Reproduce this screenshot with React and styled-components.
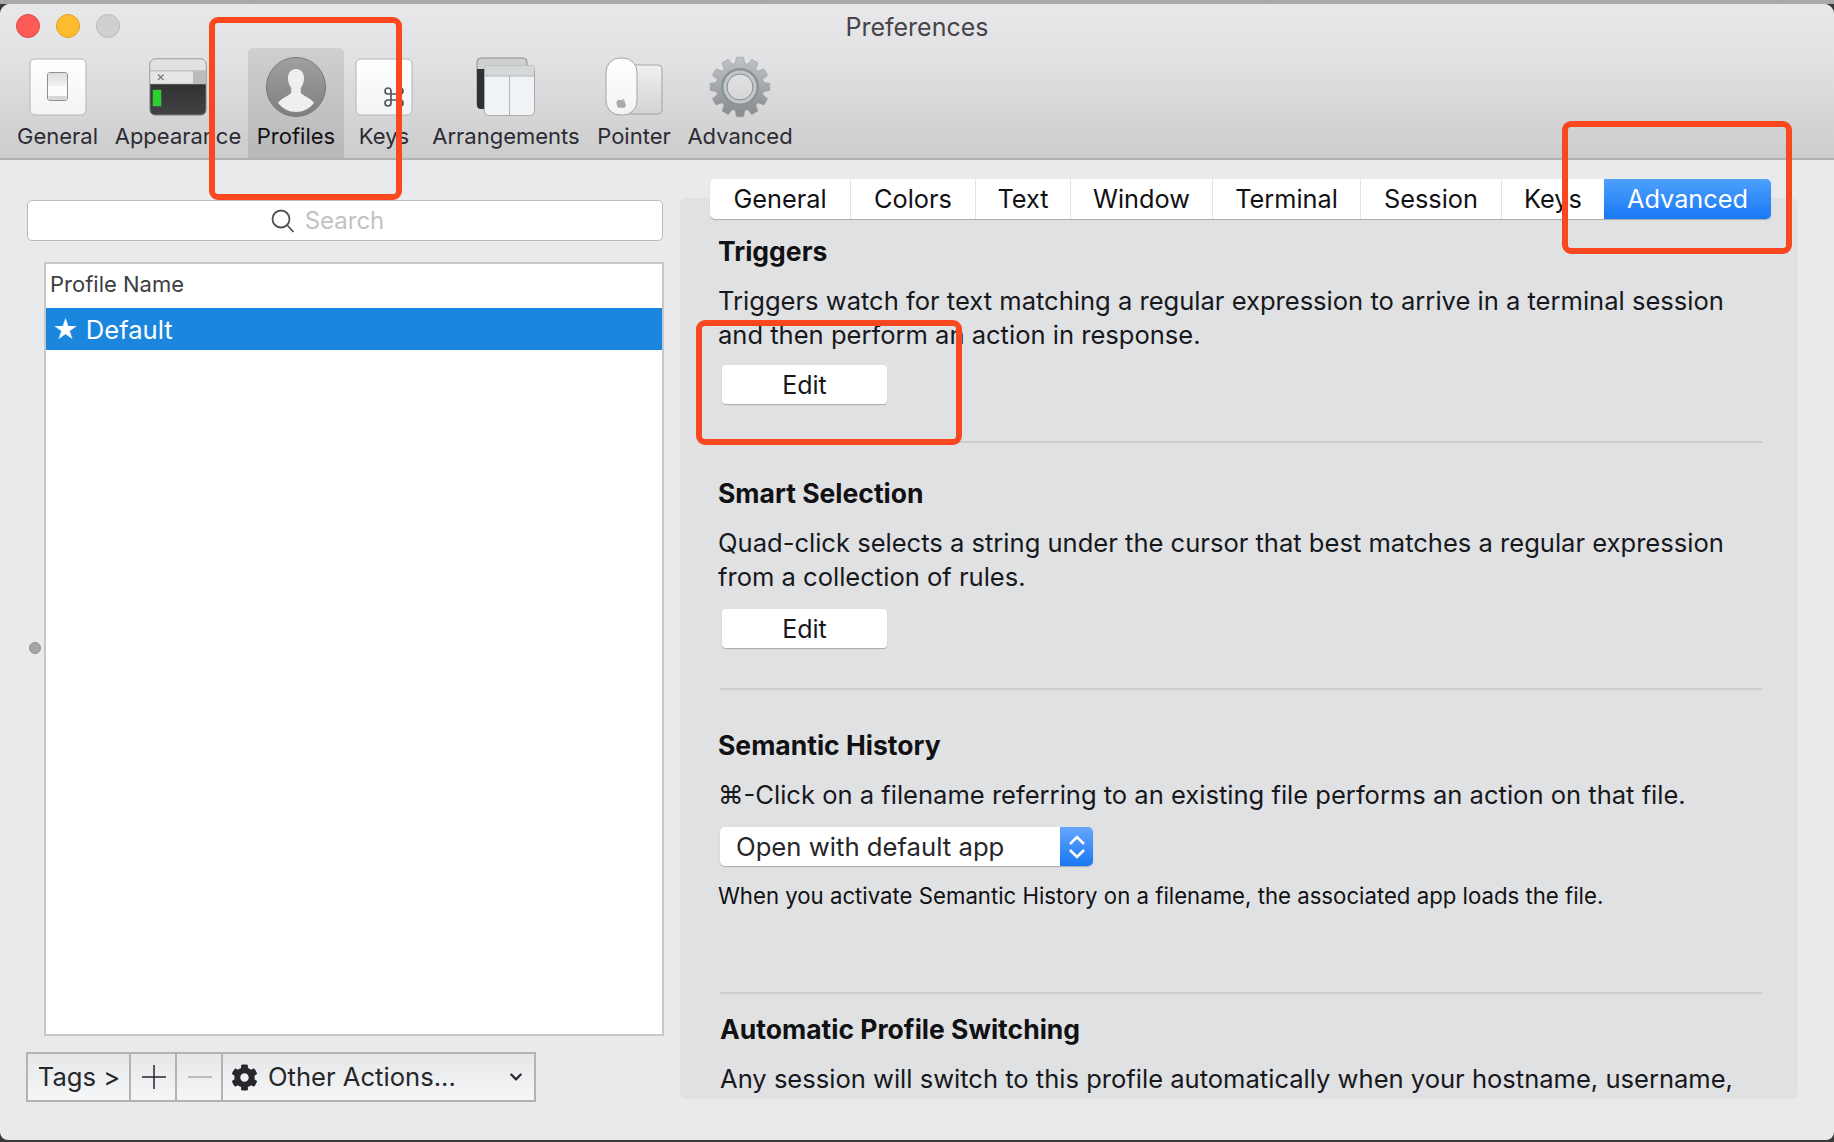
import React from 'react';
import styled, { createGlobalStyle } from 'styled-components';
import { FaCog, FaChevronDown } from 'react-icons/fa';
import { Command } from 'lucide-react';

const Global = createGlobalStyle`
  html, body { margin: 0; padding: 0; background: #8f8f8f; }
  body { font-family: Inter, "Liberation Sans", sans-serif; color: #1b1c20; }
  * { box-sizing: border-box; }
`;

const Screen = styled.div`
  width: 1834px;
  height: 1142px;
  padding-top: 4px;
  position: relative;
  overflow: hidden;
  background: linear-gradient(#a9a9a9 0 4px, #3a3a3a 4px);
`;

const Win = styled.div`
  height: 1136px;
  display: flex;
  flex-direction: column;
  background: #e9eaec;
  border-radius: 10px 10px 8px 8px;
  overflow: hidden;
`;

const Head = styled.header`
  height: 156px;
  flex: none;
  background: linear-gradient(#e8e7e9 0%, #e2e1e3 35%, #cdcccd 100%);
  border-bottom: 2px solid #b1b1b1;
`;

const TitleRow = styled.div`
  height: 44px;
  display: grid;
  grid-template-columns: 1fr auto 1fr;
  align-items: center;
`;

const Lights = styled.div`
  display: flex;
  gap: 16px;
  padding-left: 16px;
`;

const Light = styled.span`
  width: 24px;
  height: 24px;
  border-radius: 50%;
  background: ${(p) => p.$c};
  border: 1px solid ${(p) => p.$b};
`;

const Title = styled.div`
  font-size: 25px;
  color: #45454a;
  padding-top: 2px;
`;

const Tools = styled.nav`
  display: flex;
  padding-left: 7px;
`;

const Tool = styled.div`
  width: ${(p) => p.$w}px;
  height: 110px;
  flex: none;
  display: flex;
  flex-direction: column;
  align-items: center;
  background: ${(p) => (p.$on ? 'linear-gradient(#cfced0, #b9b8b9)' : 'none')};
  border-radius: 5px 5px 0 0;
  color: ${(p) => (p.$on ? '#111114' : '#2b2c33')};
`;

const ToolIcon = styled.div`
  width: 64px;
  height: 64px;
  margin-top: 7px;
  display: flex;
  align-items: center;
  justify-content: center;
`;

const ToolLabel = styled.span`
  font-size: 22px;
  line-height: 26px;
  margin-top: 4px;
  white-space: nowrap;
`;

const Body = styled.div`
  flex: 1;
  display: flex;
  min-height: 0;
`;

const Side = styled.aside`
  width: 680px;
  flex: none;
  padding: 40px 17px 0 27px;
  display: flex;
  flex-direction: column;
`;

const Search = styled.div`
  height: 41px;
  flex: none;
  padding: 0 35px 0 0;
  display: flex;
  align-items: center;
  justify-content: center;
  gap: 10px;
  background: #fff;
  border: 1px solid #b9b9bb;
  border-radius: 5px;
  color: #c2c2c4;
  font-size: 24px;
  line-height: 44px;
`;

const List = styled.div`
  height: 774px;
  flex: none;
  margin: 21px -1px 16px 17px;
  background: #fff;
  border: 2px solid #c6c7c8;
`;

const ListHead = styled.div`
  height: 44px;
  padding: 0 0 4px 4px;
  display: flex;
  align-items: center;
  font-size: 22px;
  color: #3d3e42;
`;

const Row = styled.div`
  height: 42px;
  padding: 0 0 0 6px;
  display: flex;
  align-items: center;
  gap: 7px;
  background: #1b86de;
  color: #fff;
  font-size: 25.6px;
`;

const Bar = styled.div`
  width: 510px;
  height: 50px;
  flex: none;
  margin-left: -1px;
  display: flex;
  border: 2px solid #b3b3b5;
  background: linear-gradient(#e6e7e9, #f5f6f7);
`;

const BarCell = styled.div`
  width: ${(p) => p.$w}px;
  flex: ${(p) => (p.$w ? 'none' : 1)};
  display: flex;
  align-items: center;
  justify-content: ${(p) => (p.$w ? 'center' : 'flex-start')};
  gap: 10px;
  padding: ${(p) => (p.$w ? '0 0 0 1px' : '0 11px 0 8px')};
  font-size: 25.6px;
  line-height: 32px;
  color: #26272b;
  border-right: 2px solid #b3b3b5;
  &:last-child { border-right: 0; }
`;

const ActionLabel = styled.span`
  flex: 1;
`;

const Main = styled.main`
  flex: 1;
  padding: 19px 36px 0 0;
`;

const Tabs = styled.div`
  position: relative;
  z-index: 1;
  display: flex;
  width: 1061px;
  height: 40px;
  margin: 0 0 -21px 30px;
  background: #fff;
  border-radius: 5px;
  box-shadow: 0 1px 1px #a9a9ab;
`;

const Tab = styled.div`
  width: ${(p) => p.$w}px;
  flex: none;
  padding-bottom: 2px;
  display: flex;
  align-items: center;
  justify-content: center;
  font-size: 25.3px;
  color: ${(p) => (p.$on ? '#fff' : '#111114')};
  background: ${(p) => (p.$on ? 'linear-gradient(#4ea1fb, #1878f5)' : 'none')};
  border-right: ${(p) => (p.$on ? 0 : '1px solid #e2e2e3')};
  border-radius: ${(p) => (p.$on ? '0 5px 5px 0' : 0)};
  &:nth-last-child(2) { border-right: 0; }
`;

const Panel = styled.section`
  height: 901px;
  padding: 0 36px 0 38px;
  background: #e0e1e3;
  border-radius: 7px;
  overflow: hidden;
`;

const Block = styled.div`
  height: ${(p) => p.$h}px;
  padding-top: ${(p) => p.$top}px;
  margin-left: ${(p) => (p.$shift ? '2px' : 0)};
`;

const Rule = styled.hr`
  height: 2px;
  margin: 0 0 0 2px;
  border: 0;
  background: #cdcecf;
`;

const Heading = styled.h3`
  margin: 0 0 18px;
  font-size: 26.5px;
  line-height: 30px;
  font-weight: 700;
  color: #111114;
`;

const Para = styled.p`
  margin: 0;
  font-size: 25.56px;
  line-height: 34px;
  color: #17181c;
  white-space: nowrap;
`;

const Small = styled.p`
  margin: 16px 0 0;
  font-size: 22.2px;
  line-height: 28px;
  color: #111114;
  white-space: nowrap;
`;

const EditBtn = styled.div`
  width: 165px;
  height: 39px;
  margin: ${(p) => p.$m}px 0 0 4px;
  display: flex;
  align-items: center;
  justify-content: center;
  background: #fff;
  border-radius: 4px;
  box-shadow: 0 1px 1px #a9a9ab;
  font-size: 25px;
  color: #17181c;
`;

const Select = styled.div`
  width: 373px;
  height: 39px;
  margin: 15px 0 0 2px;
  display: flex;
  background: #fff;
  border-radius: 5px;
  box-shadow: 0 1px 1px #a9a9ab;
  overflow: hidden;
`;

const SelectText = styled.span`
  flex: 1;
  padding-left: 16px;
  font-size: 25.7px;
  line-height: 40px;
  color: #26272b;
`;

const SelectArrow = styled.span`
  width: 33px;
  display: flex;
  align-items: center;
  justify-content: center;
  background: linear-gradient(#66a6fa, #1878f5);
`;

const Splitter = styled.span`
  position: absolute;
  left: 29px;
  top: 642px;
  width: 12px;
  height: 12px;
  border-radius: 50%;
  background: #a4a5a7;
  border: 1px solid #8e8f91;
`;

const Mark = styled.div`
  position: absolute;
  left: ${(p) => p.$x}px;
  top: ${(p) => p.$y}px;
  width: ${(p) => p.$w}px;
  height: ${(p) => p.$h}px;
  z-index: 5;
  border: 6px solid #f9481f;
  border-radius: 9px;
`;

const GeneralIcon = () => (
  <svg width="58" height="58" viewBox="0 0 58 58">
    <defs>
      <linearGradient id="ks" x1="0" y1="0" x2="0" y2="1"><stop offset="0" stopColor="#fff" /><stop offset="1" stopColor="#f1f3f5" /></linearGradient>
      <linearGradient id="sw" x1="0" y1="0" x2="0" y2="1"><stop offset="0" stopColor="#dcdee0" /><stop offset="1" stopColor="#f1f2f3" /></linearGradient>
    </defs>
    <rect x="1" y="1" width="56" height="56" rx="5" fill="url(#ks)" stroke="#b4b4b6" />
    <rect x="18.500" y="14.500" width="20" height="28" rx="2.500" fill="#fbfcfc" stroke="#8f9092" />
    <rect x="19" y="15" width="19" height="13" rx="2" fill="url(#sw)" />
    <rect x="19.500" y="38" width="18" height="4" fill="#d5d6d8" />
  </svg>
);

const AppearanceIcon = () => (
  <svg width="58" height="58" viewBox="0 0 58 58">
    <defs>
      <linearGradient id="term" x1="0" y1="0" x2="0" y2="1"><stop offset="0" stopColor="#242526" /><stop offset="1" stopColor="#414243" /></linearGradient>
    </defs>
    <rect x="1" y="1" width="56" height="56" rx="5" fill="url(#term)" stroke="#7d7d7d" />
    <path d="M1 6a5 5 0 0 1 5-5h46a5 5 0 0 1 5 5v7H1z" fill="#dfe1e2" stroke="#a8a9aa" strokeWidth="0.6" />
    <rect x="1" y="13" width="56" height="13" fill="#e4e6e7" stroke="#a8a9aa" strokeWidth="0.6" />
    <rect x="44" y="13" width="13" height="13" fill="#b9bbbc" />
    <path d="M9 16.500l5.500 5.500M14.500 16.500L9 22" stroke="#77787a" strokeWidth="1.200" />
    <rect x="4" y="32" width="8" height="16" fill="#28d42c" stroke="#57a857" strokeWidth="0.6" />
  </svg>
);

const ProfileIcon = () => (
  <svg width="60" height="60" viewBox="0 0 60 60">
    <defs>
      <linearGradient id="pf" x1="0" y1="0" x2="0" y2="1"><stop offset="0" stopColor="#a0a0a0" /><stop offset="1" stopColor="#7f7f80" /></linearGradient>
      <clipPath id="pc"><circle cx="30" cy="30" r="28" /></clipPath>
    </defs>
    <circle cx="30" cy="30" r="29.500" fill="url(#pf)" stroke="#777" />
    <path clipPath="url(#pc)" d="M30 12c-5 0-8 4-8 9 0 4 1.300 7.500 3.300 10v4c0 3-10.300 6-13.300 11 5 6 11 9 18 9s13-3 18-9c-3-5-13.300-8-13.300-11v-4c2-2.500 3.300-6 3.300-10 0-5-3-9-8-9z" fill="#eeeff0" />
  </svg>
);

const KeysIcon = () => (
  <svg width="58" height="58" viewBox="0 0 58 58">
    <rect x="1" y="1" width="56" height="56" rx="5" fill="url(#ks)" stroke="#b4b4b6" />
    <Command x="27" y="27" width="24" height="24" stroke="#55565a" strokeWidth="1.700" />
  </svg>
);

const ArrangeIcon = () => (
  <svg width="60" height="60" viewBox="0 0 60 60">
    <path d="M5 1h42a4 4 0 0 1 4 4v46H5a4 4 0 0 1-4-4V5a4 4 0 0 1 4-4z" fill="#cfd1d1" stroke="#8c8d8e" />
    <path d="M1 12h10v40H5a4 4 0 0 1-4-4z" fill="#2f3031" />
    <rect x="8.500" y="8.500" width="50" height="50" rx="4" fill="#f0f3f6" stroke="#a9aaac" />
    <path d="M9 12.500a4 4 0 0 1 4-4h41a4 4 0 0 1 4 4V19H9z" fill="#d5d8d9" />
    <path d="M33.500 19v39M9 19h49" stroke="#b4b5b6" />
  </svg>
);

const PointerIcon = () => (
  <svg width="58" height="60" viewBox="0 0 58 60">
    <defs>
      <linearGradient id="pad" x1="0" y1="0" x2="0" y2="1"><stop offset="0" stopColor="#eff0f1" /><stop offset="1" stopColor="#d2d3d4" /></linearGradient>
    </defs>
    <rect x="20" y="8" width="37" height="49" rx="4" fill="url(#pad)" stroke="#a3a4a5" />
    <rect x="1" y="1" width="31" height="57" rx="14" fill="url(#ks)" stroke="#a3a4a5" />
    <path d="M16.500 43.500c1-1.200 2-1.500 3-1.500-.2 1-.9 1.800-2 2 1 0 1.500.4 2.500.4.500 0 .8-.2 1-.2-1.600 1-1.400 3 .2 3.800-.6 1.800-1.700 3-2.700 3-.8 0-1.300-.4-2-.4s-1.300.4-2 .4c-1.400 0-3-2.600-3-5 0-2.200 1.500-3.300 2.800-3.300.8 0 1.500.4 2.200.6z" fill="#a9aaac" />
  </svg>
);

// 12 tooth outline, computed so one gradient runs over the whole gear
const gearPath = (() => {
  const pts = [];
  for (let i = 0; i < 12; i++) {
    const a = (i * Math.PI) / 6;
    [[-0.2, 24], [-0.12, 30], [0.12, 30], [0.2, 24]].forEach(([d, r]) => {
      pts.push(`${(31 + r * Math.sin(a + d)).toFixed(2)} ${(31 - r * Math.cos(a + d)).toFixed(2)}`);
    });
  }
  return `M${pts.join('L')}Z`;
})();

const GearIcon = () => (
  <svg width="62" height="62" viewBox="0 0 62 62">
    <defs>
      <linearGradient id="gr" x1="0" y1="0" x2="0" y2="1"><stop offset="0" stopColor="#bcc3c7" /><stop offset="1" stopColor="#878b8d" /></linearGradient>
      <linearGradient id="gh" x1="0" y1="0" x2="0" y2="1"><stop offset="0" stopColor="#e2e1e3" /><stop offset="1" stopColor="#d5d4d6" /></linearGradient>
    </defs>
    <path d={gearPath} fill="url(#gr)" stroke="#9a9ea0" strokeWidth="0.6" />
    <circle cx="31" cy="31" r="19" fill="#8d9295" />
    <circle cx="31" cy="31" r="16.500" fill="#c2c8cb" />
    <circle cx="31" cy="31" r="13" fill="url(#gh)" stroke="#858a8c" />
  </svg>
);

const MagIcon = () => (
  <svg width="24" height="24" viewBox="0 0 24 24" fill="none" stroke="#4f5053" strokeWidth="1.800">
    <circle cx="10" cy="10" r="8.500" />
    <path d="M16 16l6.500 7" />
  </svg>
);

const Updown = () => (
  <svg width="18" height="28" viewBox="0 0 18 28" fill="none" stroke="#fff" strokeWidth="2.500">
    <path d="M2 11l7-7 7 7M2 17l7 7 7-7" />
  </svg>
);

const tools = [
  { name: 'General', w: 101, Icon: GeneralIcon },
  { name: 'Appearance', w: 140, Icon: AppearanceIcon },
  { name: 'Profiles', w: 96, Icon: ProfileIcon, on: true },
  { name: 'Keys', w: 80, Icon: KeysIcon },
  { name: 'Arrangements', w: 164, Icon: ArrangeIcon },
  { name: 'Pointer', w: 92, Icon: PointerIcon },
  { name: 'Advanced', w: 120, Icon: GearIcon },
];

const tabs = [
  ['General', 141], ['Colors', 125], ['Text', 95], ['Window', 142],
  ['Terminal', 148], ['Session', 141], ['Keys', 102], ['Advanced', 167],
];

export default function App() {
  return (
    <Screen>
      <Global />
      <Win>
        <Head>
          <TitleRow>
            <Lights>
              <Light $c="#fc5b57" $b="#e2463f" />
              <Light $c="#fdbb2e" $b="#dfa023" />
              <Light $c="#cfcfd0" $b="#b9b9ba" />
            </Lights>
            <Title>Preferences</Title>
            <span />
          </TitleRow>
          <Tools>
            {tools.map((t) => (
              <Tool key={t.name} $w={t.w} $on={t.on}>
                <ToolIcon><t.Icon /></ToolIcon>
                <ToolLabel>{t.name}</ToolLabel>
              </Tool>
            ))}
          </Tools>
        </Head>
        <Body>
          <Side>
            <Search><MagIcon />Search</Search>
            <List>
              <ListHead>Profile Name</ListHead>
              <Row><span>★</span><span>Default</span></Row>
            </List>
            <Bar>
              <BarCell $w={103}>Tags &gt;</BarCell>
              <BarCell $w={46}>
                <svg width="24" height="24" viewBox="0 0 24 24" stroke="#26272b" strokeWidth="1.500"><path d="M12 0v24M0 12h24" /></svg>
              </BarCell>
              <BarCell $w={46}>
                <svg width="24" height="24" viewBox="0 0 24 24" stroke="#bcbdbf" strokeWidth="2"><path d="M0 12h24" /></svg>
              </BarCell>
              <BarCell>
                <FaCog size={27} color="#26272b" />
                <ActionLabel>Other Actions...</ActionLabel>
                <FaChevronDown size={14} color="#26272b" />
              </BarCell>
            </Bar>
          </Side>
          <Main>
            <Tabs>
              {tabs.map(([name, w]) => (
                <Tab key={name} $w={w} $on={name === 'Advanced'}>{name}</Tab>
              ))}
            </Tabs>
            <Panel>
              <Block $h={243} $top={38}>
                <Heading>Triggers</Heading>
                <Para>Triggers watch for text matching a regular expression to arrive in a terminal session</Para>
                <Para>and then perform an action in response.</Para>
                <EditBtn $m={13}>Edit</EditBtn>
              </Block>
              <Rule />
              <Block $h={245} $top={35}>
                <Heading>Smart Selection</Heading>
                <Para>Quad-click selects a string under the cursor that best matches a regular expression</Para>
                <Para>from a collection of rules.</Para>
                <EditBtn $m={15}>Edit</EditBtn>
              </Block>
              <Rule />
              <Block $h={302} $top={40}>
                <Heading>Semantic History</Heading>
                <Para>⌘-Click on a filename referring to an existing file performs an action on that file.</Para>
                <Select>
                  <SelectText>Open with default app</SelectText>
                  <SelectArrow><Updown /></SelectArrow>
                </Select>
                <Small>When you activate Semantic History on a filename, the associated app loads the file.</Small>
              </Block>
              <Rule />
              <Block $h={106} $top={20} $shift>
                <Heading>Automatic Profile Switching</Heading>
                <Para>Any session will switch to this profile automatically when your hostname, username,</Para>
              </Block>
            </Panel>
          </Main>
        </Body>
      </Win>
      <Splitter />
      <Mark $x={209} $y={17} $w={193} $h={183} />
      <Mark $x={1562} $y={121} $w={230} $h={133} />
      <Mark $x={696} $y={320} $w={266} $h={125} />
    </Screen>
  );
}
